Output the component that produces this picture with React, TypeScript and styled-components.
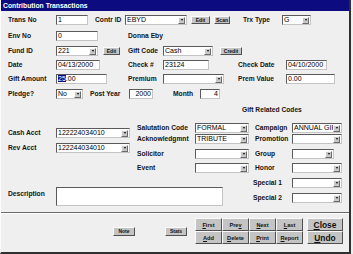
import React from "react";
import styled, { createGlobalStyle } from "styled-components";

const Global = createGlobalStyle`
  html, body { margin: 0; padding: 0; background: #efefef; }
  body { font-family: "Liberation Sans", Arial, sans-serif; }
`;

const Win = styled.div`
  box-sizing: border-box;
  width: 351px;
  height: 254px;
  background: #efefef;
  border-left: 1px solid #fdfdfd;
  border-right: 2px solid #303030;
  border-bottom: 2px solid #303030;
  display: flex;
  flex-direction: column;
  overflow: hidden;
`;

const TitleBar = styled.div`
  height: 11px;
  flex: none;
  background: #0c0c80;
  color: #fff;
  font-weight: bold;
  font-size: 6.8px;
  line-height: 11px;
  padding-left: 2px;
  white-space: nowrap;
`;

const Section = styled.div<{ $mt?: number }>`
  display: flex;
  flex-direction: column;
  padding-left: 7px;
  margin-top: ${(p) => p.$mt ?? 0}px;
`;

const Row = styled.div<{ $mt?: number; $pl?: number; $ml?: number }>`
  display: flex;
  align-items: center;
  height: 10px;
  flex: none;
  margin-top: ${(p) => p.$mt ?? 0}px;
  margin-left: ${(p) => p.$ml ?? 0}px;
  padding-left: ${(p) => p.$pl ?? 0}px;
`;

const Split = styled.div<{ $mt?: number }>`
  display: flex;
  align-items: flex-start;
  margin-top: ${(p) => p.$mt ?? 0}px;
`;

const Column = styled.div<{ $w?: number; $pt?: number; $ml?: number }>`
  display: flex;
  flex-direction: column;
  flex: none;
  width: ${(p) => (p.$w ? `${p.$w}px` : "auto")};
  padding-top: ${(p) => p.$pt ?? 0}px;
  margin-left: ${(p) => p.$ml ?? 0}px;
`;

const Label = styled.span<{ $w?: number; $ml?: number; $pt?: number }>`
  flex: none;
  display: block;
  width: ${(p) => (p.$w ? `${p.$w}px` : "auto")};
  margin-left: ${(p) => p.$ml ?? 0}px;
  padding-top: ${(p) => p.$pt ?? 0}px;
  font-size: 6.7px;
  font-weight: bold;
  color: #141414;
  white-space: nowrap;
  line-height: 10px;
`;

const Heading = styled.div`
  height: 9px;
  margin-top: 2px;
  padding-left: 105px;
  font-size: 6.7px;
  font-weight: bold;
  color: #141414;
  line-height: 9px;
  white-space: nowrap;
`;

const Field = styled.div<{ $w: number; $h?: number; $ml?: number; $right?: boolean }>`
  flex: none;
  box-sizing: border-box;
  display: flex;
  align-items: center;
  justify-content: ${(p) => (p.$right ? "flex-end" : "flex-start")};
  width: ${(p) => p.$w}px;
  height: ${(p) => p.$h ?? 10}px;
  margin-left: ${(p) => p.$ml ?? 0}px;
  background: #fff;
  border: 1px solid;
  border-color: #5a5a5a #c4c4c4 #c4c4c4 #5a5a5a;
  font-size: 7px;
  line-height: 8px;
  padding: 0 1px 0 0;
  color: #000;
  white-space: nowrap;
  overflow: hidden;
`;

const FieldText = styled.span<{ $fixed?: boolean }>`
  flex: ${(p) => (p.$fixed ? "none" : "1")};
  min-width: 0;
  overflow: hidden;
  padding-left: 1px;
`;

const Selected = styled.span`
  background: #0c0c80;
  color: #fff;
`;

const DropBtn = styled.span`
  flex: none;
  box-sizing: border-box;
  width: 7px;
  height: 7px;
  background: #c8c8c8;
  border: 1px solid;
  border-color: #fafafa #6a6a6a #6a6a6a #fafafa;
  display: flex;
  align-items: center;
  justify-content: center;
  &::after {
    content: "";
    width: 0;
    height: 0;
    border-left: 1.5px solid transparent;
    border-right: 1.5px solid transparent;
    border-top: 2px solid #000;
  }
`;

const SmallBtn = styled.div<{ $w: number; $ml?: number; $h?: number }>`
  flex: none;
  box-sizing: border-box;
  width: ${(p) => p.$w}px;
  height: ${(p) => p.$h ?? 8}px;
  margin-left: ${(p) => p.$ml ?? 0}px;
  background: #c4c4c4;
  border: 1px solid;
  border-color: #fafafa #505050 #505050 #fafafa;
  font-size: 5px;
  font-weight: bold;
  color: #111;
  display: flex;
  align-items: center;
  justify-content: center;
  white-space: nowrap;
`;

const Separator = styled.div<{ $mt?: number }>`
  flex: none;
  height: 0;
  border-top: 1px solid #6a6a6a;
  border-bottom: 1px solid #ffffff;
  margin-top: ${(p) => p.$mt ?? 0}px;
`;

const ButtonBar = styled.div<{ $mt?: number }>`
  display: flex;
  align-items: center;
  height: 26px;
  padding-left: 112px;
  margin-top: ${(p) => p.$mt ?? 0}px;
`;

const NavGrid = styled.div<{ $ml?: number }>`
  display: grid;
  grid-template-columns: repeat(4, 27px);
  grid-template-rows: repeat(2, 13px);
  margin-left: ${(p) => p.$ml ?? 0}px;
`;

const NavBtn = styled.div`
  box-sizing: border-box;
  background: #c4c4c4;
  border: 1px solid;
  border-color: #fafafa #505050 #505050 #fafafa;
  font-size: 5.6px;
  font-weight: bold;
  color: #111;
  display: flex;
  align-items: center;
  justify-content: center;
  white-space: nowrap;
`;

const BigStack = styled.div<{ $ml?: number }>`
  display: grid;
  grid-template-columns: 36px;
  grid-template-rows: repeat(2, 13px);
  margin-left: ${(p) => p.$ml ?? 0}px;
`;

const BigBtn = styled(NavBtn)`
  font-size: 8.4px;
`;

const Select: React.FC<{ w: number; ml?: number; children?: React.ReactNode }> = ({ w, ml, children }) => (
  <Field $w={w} $ml={ml}>
    <FieldText>{children}</FieldText>
    <DropBtn />
  </Field>
);

const Input: React.FC<{ w: number; ml?: number; right?: boolean; children?: React.ReactNode }> = ({ w, ml, right, children }) => (
  <Field $w={w} $ml={ml} $right={right}>
    <FieldText $fixed={right}>{children}</FieldText>
  </Field>
);

export default function App() {
  return (
    <>
      <Global />
      <Win>
        <TitleBar>Contribution Transactions</TitleBar>
        <Section>
          <Row $mt={4}>
            <Label $w={48}>Trans No</Label>
            <Input w={32}>1</Input>
            <Label $ml={7} $w={30}>Contr ID</Label>
            <Select w={62}>EBYD</Select>
            <SmallBtn $w={19} $ml={4}>Edit</SmallBtn>
            <SmallBtn $w={16} $ml={4}>Scan</SmallBtn>
            <Label $ml={13} $w={39}>Trx Type</Label>
            <Select w={29}>G</Select>
          </Row>
          <Row $mt={6}>
            <Label $w={48}>Env No</Label>
            <Input w={42}>0</Input>
            <Label $ml={30}>Donna Eby</Label>
          </Row>
          <Row $mt={5}>
            <Label $w={48}>Fund ID</Label>
            <Select w={42}>221</Select>
            <SmallBtn $w={17} $ml={5}>Edit</SmallBtn>
            <Label $ml={8} $w={35}>Gift Code</Label>
            <Select w={50}>Cash</Select>
            <SmallBtn $w={22} $ml={7}>Credit</SmallBtn>
          </Row>
          <Row $mt={4}>
            <Label $w={48}>Date</Label>
            <Input w={44}>04/13/2000</Input>
            <Label $ml={28} $w={35}>Check #</Label>
            <Input w={46}>23124</Input>
            <Label $ml={29} $w={48}>Check Date</Label>
            <Input w={41}>04/10/2000</Input>
          </Row>
          <Row $mt={4}>
            <Label $w={48}>Gift Amount</Label>
            <Input w={51}>
              <Selected>25</Selected>.00
            </Input>
            <Label $ml={21} $w={35}>Premium</Label>
            <Select w={61} />
            <Label $ml={14} $w={48}>Prem Value</Label>
            <Input w={49}>0.00</Input>
          </Row>
          <Row $mt={5}>
            <Label $w={48}>Pledge?</Label>
            <Select w={27}>No</Select>
            <Label $ml={7} $w={39}>Post Year</Label>
            <Input w={24} right>2000</Input>
            <Label $ml={20} $w={27}>Month</Label>
            <Input w={20} right>4</Input>
          </Row>
        </Section>

        <Section $mt={4}>
          <Split>
            <Column $w={122} $pt={25}>
              <Row>
                <Label $w={48}>Cash Acct</Label>
                <Select w={74}>122224034010</Select>
              </Row>
              <Row $mt={5}>
                <Label $w={48}>Rev Acct</Label>
                <Select w={74}>122244034010</Select>
              </Row>
            </Column>
            <Column $ml={7}>
              <Heading>Gift Related Codes</Heading>
              <Row $mt={9}>
                <Label $w={58}>Salutation Code</Label>
                <Select w={54}>FORMAL</Select>
                <Label $ml={6} $w={37}>Campaign</Label>
                <Select w={50}>ANNUAL GIFT</Select>
              </Row>
              <Row $mt={1}>
                <Label $w={58}>Acknowledgmnt</Label>
                <Select w={54}>TRIBUTE</Select>
                <Label $ml={6} $w={37}>Promotion</Label>
                <Select w={50} />
              </Row>
              <Row $mt={5}>
                <Label $w={58}>Solicitor</Label>
                <Select w={54} />
                <Label $ml={6} $w={37}>Group</Label>
                <Select w={42} />
              </Row>
              <Row $mt={4}>
                <Label $w={58}>Event</Label>
                <Select w={54} />
                <Label $ml={6} $w={37}>Honor</Label>
                <Select w={50} />
              </Row>
              <Row $mt={5} $pl={116}>
                <Label $w={39}>Special 1</Label>
                <Select w={50} />
              </Row>
            </Column>
          </Split>
          <Split $mt={-1}>
            <Label $w={48} $pt={2}>Description</Label>
            <Field $w={167} $h={19} />
            <Row $mt={6} $ml={30}>
              <Label $w={39}>Special 2</Label>
              <Select w={50} />
            </Row>
          </Split>
        </Section>

        <Separator $mt={6} />

        <ButtonBar $mt={4}>
          <SmallBtn $w={22} $h={9}>Note</SmallBtn>
          <SmallBtn $w={22} $h={9} $ml={30}>Stats</SmallBtn>
          <NavGrid $ml={8}>
            <NavBtn><u>F</u>irst</NavBtn>
            <NavBtn>Pre<u>v</u></NavBtn>
            <NavBtn><u>N</u>ext</NavBtn>
            <NavBtn><u>L</u>ast</NavBtn>
            <NavBtn><u>A</u>dd</NavBtn>
            <NavBtn><u>D</u>elete</NavBtn>
            <NavBtn><u>P</u>rint</NavBtn>
            <NavBtn><u>R</u>eport</NavBtn>
          </NavGrid>
          <BigStack $ml={4}>
            <BigBtn><u>C</u>lose</BigBtn>
            <BigBtn><u>U</u>ndo</BigBtn>
          </BigStack>
        </ButtonBar>
      </Win>
    </>
  );
}
